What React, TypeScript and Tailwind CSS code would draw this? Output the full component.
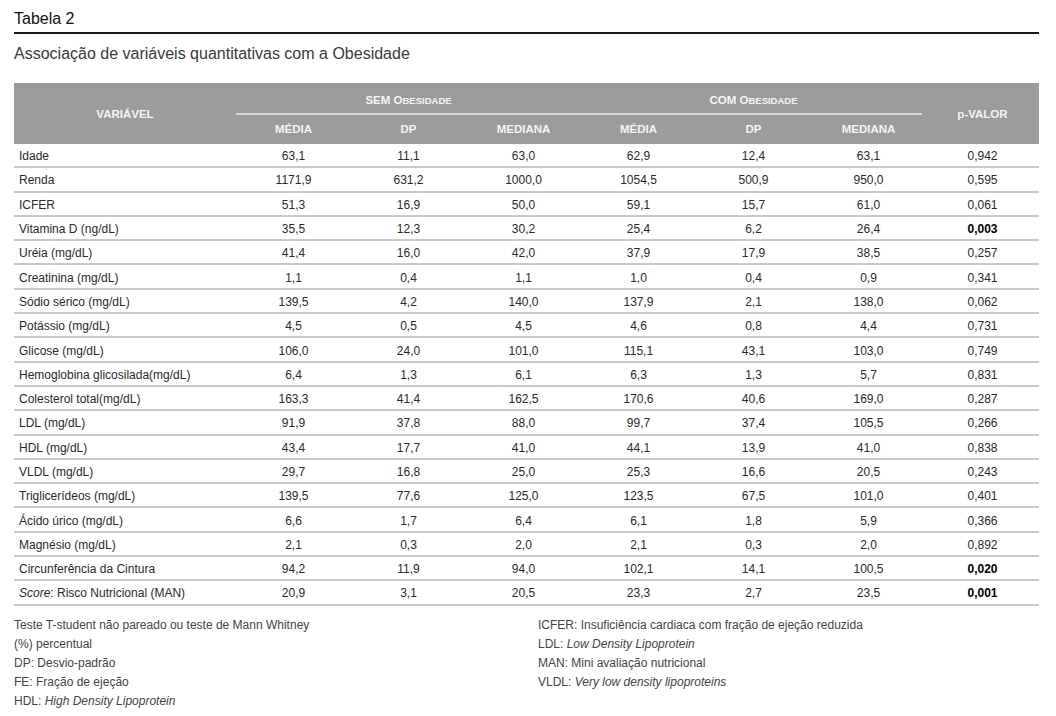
import React from 'react'

type Row = { label: React.ReactNode; values: string[]; p: string; bold?: boolean }

const rows: Row[] = [
  { label: 'Idade', values: ['63,1', '11,1', '63,0', '62,9', '12,4', '63,1'], p: '0,942' },
  { label: 'Renda', values: ['1171,9', '631,2', '1000,0', '1054,5', '500,9', '950,0'], p: '0,595' },
  { label: 'ICFER', values: ['51,3', '16,9', '50,0', '59,1', '15,7', '61,0'], p: '0,061' },
  { label: 'Vitamina D (ng/dL)', values: ['35,5', '12,3', '30,2', '25,4', '6,2', '26,4'], p: '0,003', bold: true },
  { label: 'Uréia (mg/dL)', values: ['41,4', '16,0', '42,0', '37,9', '17,9', '38,5'], p: '0,257' },
  { label: 'Creatinina (mg/dL)', values: ['1,1', '0,4', '1,1', '1,0', '0,4', '0,9'], p: '0,341' },
  { label: 'Sódio sérico (mg/dL)', values: ['139,5', '4,2', '140,0', '137,9', '2,1', '138,0'], p: '0,062' },
  { label: 'Potássio (mg/dL)', values: ['4,5', '0,5', '4,5', '4,6', '0,8', '4,4'], p: '0,731' },
  { label: 'Glicose (mg/dL)', values: ['106,0', '24,0', '101,0', '115,1', '43,1', '103,0'], p: '0,749' },
  { label: 'Hemoglobina glicosilada(mg/dL)', values: ['6,4', '1,3', '6,1', '6,3', '1,3', '5,7'], p: '0,831' },
  { label: 'Colesterol total(mg/dL)', values: ['163,3', '41,4', '162,5', '170,6', '40,6', '169,0'], p: '0,287' },
  { label: 'LDL (mg/dL)', values: ['91,9', '37,8', '88,0', '99,7', '37,4', '105,5'], p: '0,266' },
  { label: 'HDL (mg/dL)', values: ['43,4', '17,7', '41,0', '44,1', '13,9', '41,0'], p: '0,838' },
  { label: 'VLDL (mg/dL)', values: ['29,7', '16,8', '25,0', '25,3', '16,6', '20,5'], p: '0,243' },
  { label: 'Triglicerídeos (mg/dL)', values: ['139,5', '77,6', '125,0', '123,5', '67,5', '101,0'], p: '0,401' },
  { label: 'Ácido úrico (mg/dL)', values: ['6,6', '1,7', '6,4', '6,1', '1,8', '5,9'], p: '0,366' },
  { label: 'Magnésio (mg/dL)', values: ['2,1', '0,3', '2,0', '2,1', '0,3', '2,0'], p: '0,892' },
  { label: 'Circunferência da Cintura', values: ['94,2', '11,9', '94,0', '102,1', '14,1', '100,5'], p: '0,020', bold: true },
  {
    label: (
      <>
        <i>Score</i>: Risco Nutricional (MAN)
      </>
    ),
    values: ['20,9', '3,1', '20,5', '23,3', '2,7', '23,5'],
    p: '0,001',
    bold: true,
  },
]

const cols = 'grid grid-cols-[222px_repeat(6,115px)_113px]'

function GroupTitle({ first }: { first: string }) {
  return (
    <span>
      {first} O<span className="text-[9.5px]">BESIDADE</span>
    </span>
  )
}

export default function App() {
  return (
    <div className="w-[1056px] h-[716px] bg-white text-[#333] font-['Liberation_Sans',Arial,sans-serif] px-[14px] pt-[9px]">
      <div className="w-[1025px]">
        <div className="text-[16px] leading-[20px] text-[#111] pb-[3px] border-b-2 border-[#1a1a1a]">Tabela 2</div>
        <div className="text-[16px] leading-[20px] text-[#3a3a3a] mt-[10px]">
          Associação de variáveis quantitativas com a Obesidade
        </div>

        {/* header */}
        <div className={`${cols} mt-[19px] bg-[#9c9c9c] text-[#f4f4f4] font-bold text-[11.5px] h-[61px]`}>
          <div className="row-span-2 flex items-center justify-center pt-[2px]">VARIÁVEL</div>
          <div className="col-span-3 flex items-center justify-center h-[30px] pt-[5px]">
            <GroupTitle first="SEM" />
          </div>
          <div className="col-span-3 flex items-center justify-center h-[30px] pt-[5px]">
            <GroupTitle first="COM" />
          </div>
          <div className="row-span-2 flex items-center justify-center pt-[2px]">p-VALOR</div>
          <div className="col-span-6 flex flex-col">
            <div className="h-[2px] bg-[#d6d6d6] mr-[4px]" />
            <div className="grid grid-cols-6 h-[29px] items-center text-center">
              <span>MÉDIA</span>
              <span>DP</span>
              <span>MEDIANA</span>
              <span>MÉDIA</span>
              <span>DP</span>
              <span>MEDIANA</span>
            </div>
          </div>
        </div>

        {/* body */}
        <div className="text-[12px] text-[#2a2a2a]">
          {rows.map((r, i) => (
            <div key={i} className={`${cols} h-[24.3px] items-center pt-[2px] border-b-2 border-[#c9c9c9]`}>
              <div className="pl-[5px] whitespace-nowrap">{r.label}</div>
              {r.values.map((v, j) => (
                <div key={j} className="text-center">
                  {v}
                </div>
              ))}
              <div className={`text-center ${r.bold ? 'font-bold text-black' : ''}`}>{r.p}</div>
            </div>
          ))}
        </div>

        {/* footnotes */}
        <div className="grid grid-cols-[524px_1fr] text-[12px] leading-[19px] text-[#444] mt-[10px]">
          <div>
            <div>Teste T-student não pareado ou teste de Mann Whitney</div>
            <div>(%) percentual</div>
            <div>DP: Desvio-padrão</div>
            <div>FE: Fração de ejeção</div>
            <div>
              HDL: <i>High Density Lipoprotein</i>
            </div>
          </div>
          <div>
            <div>ICFER: Insuficiência cardiaca com fração de ejeção reduzida</div>
            <div>
              LDL: <i>Low Density Lipoprotein</i>
            </div>
            <div>MAN: Mini avaliação nutricional</div>
            <div>
              VLDL: <i>Very low density lipoproteins</i>
            </div>
          </div>
        </div>
      </div>
    </div>
  )
}
